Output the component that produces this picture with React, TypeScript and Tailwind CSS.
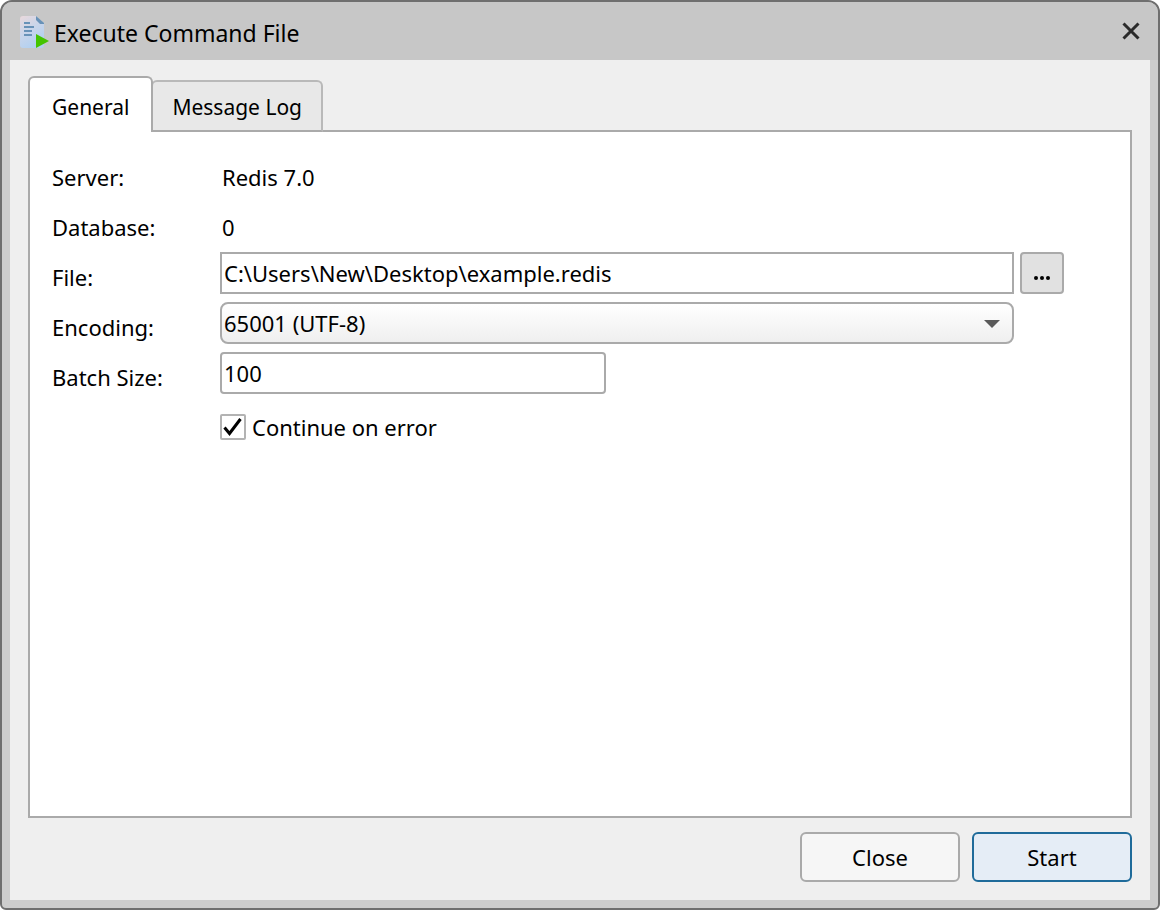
import { useState } from 'react'
import type { ReactNode } from 'react'

interface FormRowProps {
  label: string
  htmlFor?: string
  children: ReactNode
}

const tabs = ['General', 'Message Log']

function CommandFileIcon() {
  return (
    <svg width="30" height="34" viewBox="0 0 30 34" aria-hidden="true">
      <defs>
        <linearGradient id="page" x1="0" y1="0" x2="0.5" y2="1">
          <stop offset="0" stopColor="#ead9dc" />
          <stop offset="0.5" stopColor="#c9d5ea" />
          <stop offset="1" stopColor="#b2d0f0" />
        </linearGradient>
      </defs>
      <path d="M3 0H16L24 8V29a3 3 0 0 1-3 3H3a3 3 0 0 1-3-3V3a3 3 0 0 1 3-3Z" fill="url(#page)" />
      <path d="M16 0L24 7V8H20L16 4Z" fill="#6892b8" />
      <path d="M4 7H10M4 11H14M4 15H12M4 19H12" stroke="#6892b8" strokeWidth="2" />
      <path d="M16 18L29 25L16 32Z" fill="#45c400" />
    </svg>
  )
}

function FormRow({ label, htmlFor, children }: FormRowProps) {
  return (
    <div className="flex h-[50px] items-start">
      <label htmlFor={htmlFor} className="w-[168px] shrink-0 leading-[50px]">
        {label}
      </label>
      {children}
    </div>
  )
}

export default function App() {
  const [activeTab, setActiveTab] = useState('General')
  const [file, setFile] = useState('C:\\Users\\New\\Desktop\\example.redis')
  const [batchSize, setBatchSize] = useState('100')
  const [continueOnError, setContinueOnError] = useState(true)

  return (
    <div className="flex h-screen flex-col overflow-hidden rounded-t-xl rounded-b-md border-2 border-[#6f6f6f] bg-[#cdcdcd] font-['Noto_Sans',sans-serif] text-[22px] text-black">
      <header className="flex h-[58px] shrink-0 items-center justify-between bg-[#c7c7c7] px-[18px]">
        <div className="flex items-center gap-1 pt-1">
          <CommandFileIcon />
          <h1 className="text-[23px] leading-8">Execute Command File</h1>
        </div>
        <button type="button" aria-label="Close window">
          <svg width="18" height="18" viewBox="0 0 18 18" aria-hidden="true">
            <path d="M1.5 1.5L16.5 16.5M16.5 1.5L1.5 16.5" stroke="#2b2b2b" strokeWidth="3" />
          </svg>
        </button>
      </header>

      <main className="mx-2 mb-2 flex flex-1 flex-col bg-[#efefef] px-[18px] pt-4 pb-[18px]">
        <div role="tablist" className="z-10 -mb-0.5 flex h-14 items-end text-[21px]">
          {tabs.map((tab) => (
            <button
              key={tab}
              type="button"
              role="tab"
              aria-selected={activeTab === tab}
              onClick={() => setActiveTab(tab)}
              className={
                activeTab === tab
                  ? 'z-10 h-14 rounded-t-md border-2 border-b-0 border-[#aaaaaa] bg-white px-[22px] pt-1.5'
                  : '-ml-0.5 h-[52px] rounded-t-md border-2 border-[#b9b9b9] border-b-[#aaaaaa] bg-[#e8e8e8] px-[19px] pt-1'
              }
            >
              {tab}
            </button>
          ))}
        </div>

        <section role="tabpanel" className="flex-1 border-2 border-[#aaaaaa] bg-white pt-5 pr-[66px] pl-[22px]">
          {activeTab === 'General' && (
            <form>
              <FormRow label="Server:">
                <span className="pl-0.5 leading-[50px]">Redis 7.0</span>
              </FormRow>
              <FormRow label="Database:">
                <span className="pl-0.5 leading-[50px]">0</span>
              </FormRow>
              <FormRow label="File:" htmlFor="file">
                <input
                  id="file"
                  value={file}
                  onChange={(e) => setFile(e.target.value)}
                  className="h-[42px] min-w-0 flex-1 border-2 border-[#aaaaaa] bg-white px-0.5"
                />
                <button
                  type="button"
                  aria-label="Browse"
                  className="ml-1.5 flex h-[42px] w-11 items-center justify-center rounded border-2 border-[#aaaaaa] bg-[#e1e1e1] pt-2.5"
                >
                  <svg width="16" height="4" viewBox="0 0 16 4" aria-hidden="true">
                    <circle cx="2" cy="2" r="2" />
                    <circle cx="8" cy="2" r="2" />
                    <circle cx="14" cy="2" r="2" />
                  </svg>
                </button>
              </FormRow>
              <FormRow label="Encoding:" htmlFor="encoding">
                <div className="relative mr-[50px] flex-1">
                  <select
                    id="encoding"
                    className="h-[42px] w-full appearance-none rounded-lg border-2 border-[#aaaaaa] bg-linear-to-b from-white to-[#efefef] px-0.5"
                  >
                    <option>65001 (UTF-8)</option>
                  </select>
                  <svg
                    width="16"
                    height="8"
                    viewBox="0 0 16 8"
                    className="pointer-events-none absolute top-[18px] right-3.5"
                    aria-hidden="true"
                  >
                    <path d="M0 0H16L8 8Z" fill="#5a5a5a" />
                  </svg>
                </div>
              </FormRow>
              <FormRow label="Batch Size:" htmlFor="batch-size">
                <input
                  id="batch-size"
                  value={batchSize}
                  onChange={(e) => setBatchSize(e.target.value)}
                  className="h-[42px] w-[386px] rounded border-2 border-[#aaaaaa] bg-white px-0.5"
                />
              </FormRow>
              <div className="ml-[168px] flex h-[50px] items-center gap-1.5">
                <div className="relative size-[26px]">
                  <input
                    id="continue"
                    type="checkbox"
                    checked={continueOnError}
                    onChange={(e) => setContinueOnError(e.target.checked)}
                    className="block size-[26px] appearance-none rounded-xs border-2 border-[#b3b3b3] bg-white"
                  />
                  {continueOnError && (
                    <svg
                      width="26"
                      height="26"
                      viewBox="0 0 26 26"
                      className="pointer-events-none absolute inset-0"
                      aria-hidden="true"
                    >
                      <path d="M4.5 13.5L9.5 19.5L20.5 5" fill="none" stroke="#000" strokeWidth="3" />
                    </svg>
                  )}
                </div>
                <label htmlFor="continue">Continue on error</label>
              </div>
            </form>
          )}
        </section>

        <footer className="mt-3.5 flex justify-end gap-3">
          <button type="button" className="h-[50px] w-40 rounded-md border-2 border-[#aaaaaa] bg-[#f6f6f6]">
            Close
          </button>
          <button type="button" className="h-[50px] w-40 rounded-md border-2 border-[#1f6b9a] bg-[#e5edf6]">
            Start
          </button>
        </footer>
      </main>
    </div>
  )
}
